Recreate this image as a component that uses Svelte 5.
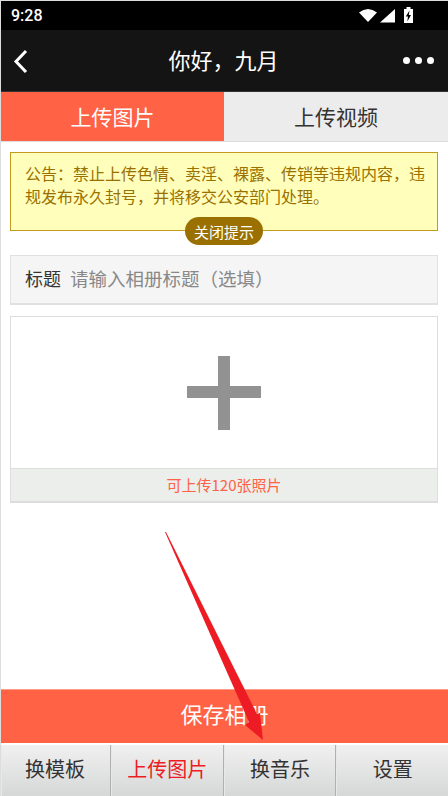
<script lang="ts">
  const tabs = ["上传图片", "上传视频"];
  const navItems = ["换模板", "上传图片", "换音乐", "设置"];
  let activeTab = $state(0);
  let showNotice = $state(true);
</script>

<div class="page">
  <div class="status-bar">
    <span class="clock">9:28</span>
    <svg class="status-icons" width="56" height="20" viewBox="0 0 56 20">
      <path d="M1 6.5 Q10 -0.5 19 6.5 L10 16 Z" fill="#fff" />
      <path d="M37 3 V16.5 H22 Z" fill="#fff" />
      <path d="M46 3 h2.5 v-2 h4 v2 h2.5 v14 h-9 Z" fill="#fff" />
      <path d="M51.5 4.5 L47.8 10.5 H50 L49.3 15.5 L53 9 H50.8 Z" fill="#000" />
    </svg>
  </div>

  <header class="top-bar">
    <svg class="back" width="16" height="24" viewBox="0 0 16 24">
      <path d="M13 2 L3 12.5 L13 23" fill="none" stroke="#fff" stroke-width="3" />
    </svg>
    <h1>你好，九月</h1>
    <div class="dots"><i></i><i></i><i></i></div>
  </header>

  <div class="tabs">
    {#each tabs as t, i}
      <button class="tab" class:active={activeTab === i} onclick={() => (activeTab = i)}>{t}</button>
    {/each}
  </div>

  <main>
    {#if showNotice}
      <div class="notice">
        <p>公告：禁止上传色情、卖淫、裸露、传销等违规内容，违规发布永久封号，并将移交公安部门处理。</p>
        <button class="close-tip" onclick={() => (showNotice = false)}>关闭提示</button>
      </div>
    {/if}

    <label class="title-row">
      <span>标题</span>
      <input type="text" placeholder="请输入相册标题（选填）" />
    </label>

    <div class="upload">
      <div class="upload-area">
        <svg width="74" height="74" viewBox="0 0 74 74">
          <path d="M31 0 H43 V30 H74 V42 H43 V74 H31 V42 H0 V30 H31 Z" fill="#929292" />
        </svg>
      </div>
      <div class="upload-hint">可上传120张照片</div>
    </div>
  </main>

  <button class="save">保存相册</button>

  <nav>
    {#each navItems as item, i}
      <button class="nav-item" class:current={i === 1}>{item}</button>
    {/each}
  </nav>

  <!-- red annotation arrow drawn over the page -->
  <svg class="arrow" width="448" height="796" viewBox="0 0 448 796">
    <path d="M165 532 L166 532 L240 680 L257 714 L260 713 L263 740 L245 725 L249 722 Z" fill="#ed1c24" />
  </svg>
</div>

<style>
  :global(body) {
    margin: 0;
    background: #fff;
  }

  .page {
    position: relative;
    width: 448px;
    height: 796px;
    box-sizing: border-box;
    border-top: 1px solid #ddd;
    border-left: 1px solid #ddd;
    display: flex;
    flex-direction: column;
    overflow: hidden;
    font-family: "Noto Sans CJK SC", "Noto Sans", sans-serif;
  }

  button {
    font-family: inherit;
    border: none;
    padding: 0;
    margin: 0;
  }

  .status-bar {
    height: 29px;
    flex-shrink: 0;
    background: #000;
    color: #fff;
    display: flex;
    align-items: center;
    justify-content: space-between;
    padding: 0 10px;
  }

  .clock {
    font-family: Roboto, sans-serif;
    font-size: 16px;
    font-weight: 500;
  }

  .status-icons {
    margin-right: 24px;
  }

  .top-bar {
    height: 62px;
    box-sizing: border-box;
    flex-shrink: 0;
    background: #141414;
    border-bottom: 1px solid #333;
    display: grid;
    grid-template-columns: 1fr auto 1fr;
    align-items: center;
    padding: 0 14px 0 12px;
    color: #fff;
  }

  .top-bar h1 {
    margin: 0 0 4px;
    font-size: 22px;
    font-weight: 400;
    line-height: 1;
  }

  .dots {
    display: flex;
    gap: 5px;
    justify-self: end;
  }

  .dots i {
    width: 7px;
    height: 7px;
    background: #fff;
    border-radius: 50%;
  }

  .tabs {
    display: flex;
    height: 50px;
    flex-shrink: 0;
    border-bottom: 1px solid #ddd;
    box-sizing: border-box;
  }

  .tab {
    flex: 1;
    font-size: 21px;
    background: #ececec;
    color: #333;
    padding-bottom: 2px;
  }

  .tab.active {
    flex: 0 0 223px;
    background: #ff6244;
    color: #fff;
  }

  main {
    flex: 1;
    padding: 10px 10px 0 9px;
    display: flex;
    flex-direction: column;
  }

  .notice {
    position: relative;
    background: #ffffbb;
    border: 1px solid #c29a1d;
    padding: 9px 8px 22px 14px;
    height: 79px;
    box-sizing: border-box;
    margin-bottom: 24px;
  }

  .notice p {
    margin: 0;
    font-size: 16px;
    line-height: 23px;
    color: #9a7100;
  }

  .close-tip {
    position: absolute;
    left: 50%;
    bottom: -15px;
    transform: translateX(-50%);
    width: 78px;
    height: 28px;
    border-radius: 14px;
    background: #9a7100;
    color: #fff;
    font-size: 15px;
  }

  .title-row {
    display: flex;
    align-items: center;
    gap: 9px;
    height: 50px;
    box-sizing: border-box;
    background: #f5f5f5;
    border: 1px solid #e0e0e0;
    border-bottom-width: 2px;
    padding: 0 0 3px 14px;
    margin-bottom: 11px;
    font-size: 18px;
    color: #333;
  }

  .title-row input {
    flex: 1;
    min-width: 0;
    border: none;
    outline: none;
    background: transparent;
    font-family: inherit;
    font-size: 18.5px;
    padding: 0;
  }

  .title-row input::placeholder {
    color: #888;
    opacity: 1;
  }

  .upload {
    border: 1px solid #ddd;
    border-bottom-width: 2px;
    height: 187px;
    box-sizing: border-box;
    display: flex;
    flex-direction: column;
  }

  .upload-area {
    flex: 1;
    display: flex;
    align-items: center;
    justify-content: center;
    background: #fff;
  }

  .upload-hint {
    height: 32px;
    border-top: 1px solid #ddd;
    background: #eceeec;
    color: #ff6244;
    font-size: 15px;
    line-height: 32px;
    text-align: center;
  }

  .save {
    height: 54px;
    box-sizing: border-box;
    flex-shrink: 0;
    background: #ff6244;
    border-top: 1px solid #ff9c88;
    padding-bottom: 8px;
    color: #fff;
    font-size: 22px;
    margin-bottom: 2px;
  }

  nav {
    display: flex;
    height: 51px;
    flex-shrink: 0;
  }

  .nav-item {
    flex: 1;
    background: linear-gradient(#f0f0f0, #d6d8d8);
    border-right: 1px solid #b0b0b0;
    border-left: 1px solid #e8e8e8;
    padding-bottom: 5px;
    color: #333;
    font-size: 20px;
  }

  .nav-item:first-child {
    flex: 0 0 110px;
    padding-right: 2px;
  }

  .nav-item:last-child {
    border-right: none;
  }

  .nav-item.current {
    color: #ed1c24;
  }

  .arrow {
    position: absolute;
    left: -1px;
    top: -1px;
    pointer-events: none;
  }
</style>
